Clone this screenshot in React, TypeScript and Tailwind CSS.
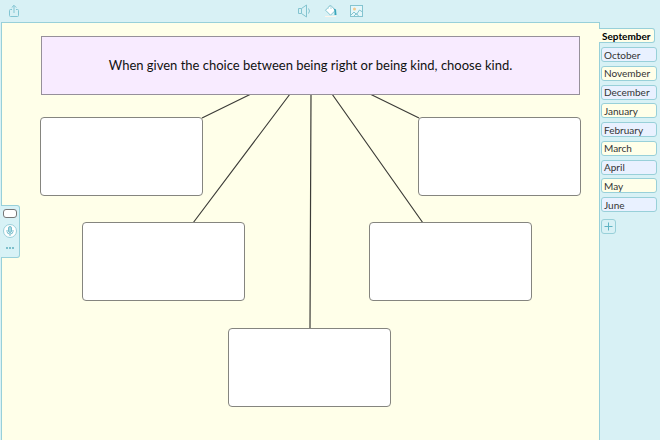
import React from "react";

type Month = { name: string; tint: string };

const months: Month[] = [
  { name: "October", tint: "bg-[#e9f1ff]" },
  { name: "November", tint: "bg-[#ffffe9]" },
  { name: "December", tint: "bg-[#e9f1ff]" },
  { name: "January", tint: "bg-[#ffffe9]" },
  { name: "February", tint: "bg-[#e9f1ff]" },
  { name: "March", tint: "bg-[#ffffe9]" },
  { name: "April", tint: "bg-[#e9f1ff]" },
  { name: "May", tint: "bg-[#ffffe9]" },
  { name: "June", tint: "bg-[#e9f1ff]" },
];

const answers = [
  { label: "Answer 1", place: "left-[38px] top-[94px]" },
  { label: "Answer 2", place: "left-[80px] top-[199px]" },
  { label: "Answer 3", place: "left-[226px] top-[305px]" },
  { label: "Answer 4", place: "left-[367px] top-[199px]" },
  { label: "Answer 5", place: "left-[416px] top-[94px]" },
];

function Header() {
  return (
    <header className="grid h-[22px] grid-cols-3 items-center">
      <button aria-label="Share" className="ml-[8px] w-[12px]">
        <svg width="12" height="14" viewBox="0 0 12 14" fill="none" stroke="#82c5d3" strokeWidth="1">
          <path d="M4 5.500H2.500Q1.500 5.500 1.500 6.500V11.500Q1.500 12.500 2.500 12.500H9.500Q10.500 12.500 10.500 11.500V6.500Q10.500 5.500 9.500 5.500H8M6 9V1.500M3.700 3.600L6 1.300L8.300 3.600" />
        </svg>
      </button>
      <div className="flex items-center justify-center gap-[12px] pl-px">
        <button aria-label="Sound">
          <svg width="14" height="14" viewBox="0 0 14 14" fill="none" stroke="#84c4d0" strokeWidth="1">
            <path d="M0.500 4.500H3.500L8.500 1V13L3.500 9.500H0.500ZM3.500 4.500V9.500M10.500 4.500Q12.500 7 10.500 9.500" />
          </svg>
        </button>
        <button aria-label="Fill colour">
          <svg width="14" height="14" viewBox="0 0 14 14" fill="none">
            <path d="M6.500 1.200L11.500 6.200L6.500 11.200L1.500 6.200Z" fill="#fff" stroke="#84c4d0" />
            <path d="M4.500 4.500V2.500Q5.500 0.500 7 2.500V5" stroke="#a8d8e0" />
            <path d="M9.500 4.500L12 5.500L12.500 11H10.500V7Z" fill="#39a6bb" />
            <path d="M1 12.500H12" stroke="#fff4ea" />
          </svg>
        </button>
        <button aria-label="Picture">
          <svg width="14" height="14" viewBox="0 0 14 14" fill="none" stroke="#84c4d0">
            <rect x="0.500" y="1.500" width="12" height="11" fill="#e4f7fa" />
            <path d="M1 11L4 8L6.500 10.500L9.500 6L12.500 8M4 12L6.500 9.500L8.500 12" />
            <circle cx="4.500" cy="5" r="1.500" fill="#f1c98c" stroke="none" />
          </svg>
        </button>
      </div>
    </header>
  );
}

function Tools() {
  return (
    <div className="absolute -left-px top-[182px] flex h-[53px] w-[19px] flex-col items-center rounded-r-[3px] border border-l-0 border-[#98d0d9] bg-[#d8f2f6] pt-[3px]">
      <button aria-label="Add box" className="h-[9px] w-[14px] rounded-[3px] border border-[#777] bg-white" />
      <button aria-label="Record" className="mt-[6px] flex size-[14px] items-center justify-center rounded-full border border-[#9bd0da] bg-white">
        <svg width="12" height="12" viewBox="0 0 12 12" fill="none" stroke="#79bfcd">
          <rect x="4.500" y="1.500" width="3" height="6" rx="1.500" fill="#a9d8e1" />
          <path d="M3 5V6.500Q3 9 6 9Q9 9 9 6.500V5M6 9V11" />
        </svg>
      </button>
      <button aria-label="More" className="mt-[8px] flex h-[4px] items-center gap-px">
        <span className="size-[2px] bg-[#7dbfcb]" />
        <span className="size-[2px] bg-[#7dbfcb]" />
        <span className="size-[2px] bg-[#7dbfcb]" />
      </button>
    </div>
  );
}

export default function App() {
  return (
    <div className="flex min-h-screen flex-col bg-[#d8f1f5] font-['Lato','Open_Sans',sans-serif]">
      <Header />
      <div className="flex flex-1 pl-px">
        <main className="relative min-h-[417px] flex-1 border border-b-0 border-[#98d0d9] bg-[#ffffe9]">
          <svg className="absolute left-0 top-0" width="596" height="417" viewBox="2 23 596 417" fill="none" stroke="#3c3c38" strokeWidth="1.200">
            <path d="M251 94L202 118M290 94L193 223M311 94L310 329M332 94L423 223M370 94L419 118" />
          </svg>
          <h1 className="absolute left-[39px] top-[13px] flex h-[59px] w-[539px] items-center justify-center border border-[#96909a] bg-[#f8ebff] pb-[2px] text-[13px] leading-[18px] text-[#111]">
            When given the choice between being right or being kind, choose kind.
          </h1>
          {answers.map((a) => (
            <textarea
              key={a.label}
              aria-label={a.label}
              className={`absolute h-[79px] w-[163px] resize-none rounded-[4px] border border-[#85857f] bg-white p-2 text-[12px] ${a.place}`}
            />
          ))}
          <Tools />
        </main>
        <nav aria-label="Months" className="w-[60px]">
          <button className="relative -ml-px mt-[6px] flex h-[15px] w-[56px] items-center rounded-r-[3px] border border-l-0 border-[#98d0d9] bg-[#ffffe9] pl-[3px] text-[10px] font-bold leading-[12px] text-black">
            September
          </button>
          <div className="ml-px mt-[4px] flex h-[165px] w-[56px] flex-col justify-between">
            {months.map((m) => (
              <button
                key={m.name}
                className={`flex h-[15px] items-center rounded-[3px] border border-[#98d0d9] pl-[2px] text-[10px] leading-[12px] text-[#333] ${m.tint}`}
              >
                {m.name}
              </button>
            ))}
          </div>
          <button
            aria-label="Add page"
            className="ml-px mt-[7px] flex size-[15px] items-center justify-center rounded-[3px] border border-[#98d0d9]"
          >
            <svg width="9" height="9" viewBox="0 0 9 9" stroke="#5fb3c3">
              <path d="M4.500 0.500V8.500M0.500 4.500H8.500" />
            </svg>
          </button>
        </nav>
      </div>
    </div>
  );
}
